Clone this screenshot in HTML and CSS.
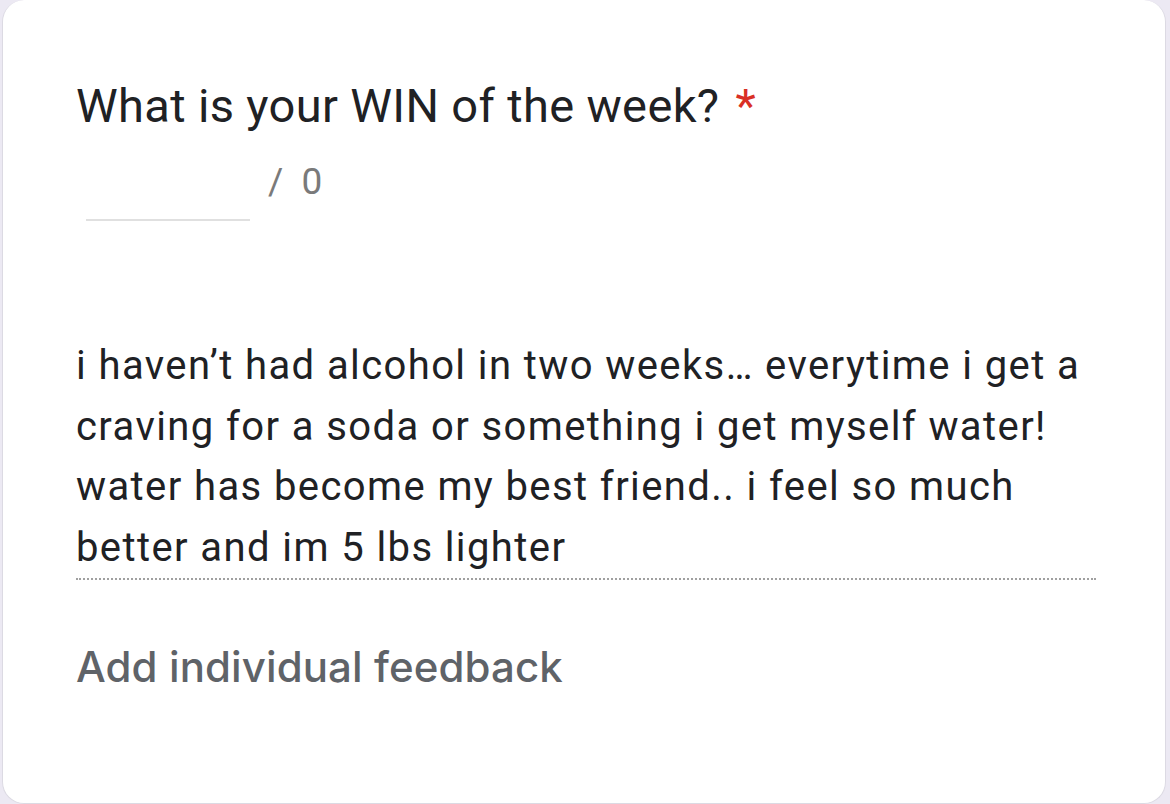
FILE: index.html
```html
<!DOCTYPE html>
<html>
<head>
<meta charset="utf-8">
<link rel="stylesheet" href="styles.css">
</head>
<body>
<div class="card">
  <div class="title">What is your WIN of the week?<span class="req">*</span></div>
  <div class="score">
    <div class="score-input"></div>
    <div class="score-total">/&nbsp;&nbsp;0</div>
  </div>
  <div class="answer">i haven’t had alcohol in two weeks… everytime i get a craving for a soda or something i get myself water! water has become my best friend.. i feel so much better and im 5 lbs lighter</div>
  <div class="feedback">Add individual feedback</div>
</div>
</body>
</html>
```
FILE: styles.css
```css
html, body {
  margin: 0;
  padding: 0;
  background: #ece9f3;
}
body {
  width: 1170px;
  height: 804px;
  overflow: hidden;
  font-family: Roboto, "Liberation Sans", sans-serif;
}
.card {
  box-sizing: border-box;
  margin: 0 4px 0 2px;
  height: 804px;
  background: #ffffff;
  border: 1px solid #dcdae3;
  border-top: none;
  border-radius: 22px;
  padding: 76px 74px 0 73px;
}
.title {
  font-size: 47px;
  line-height: 60px;
  color: #202124;
  letter-spacing: 0.35px;
}
.req {
  color: #d93025;
  margin-left: 16px;
}
.score {
  display: flex;
  align-items: flex-start;
  height: 200px;
}
.score-input {
  width: 164px;
  height: 2px;
  background: #e0e0e0;
  margin: 83px 0 0 10px;
}
.score-total {
  font-size: 37px;
  color: #7a7a7a;
  margin-left: 18px;
  margin-top: 24px;
  line-height: 44px;
}
.answer {
  font-size: 40px;
  line-height: 60.5px;
  letter-spacing: 1.4px;
  color: #202124;
  width: 1020px;
  padding-bottom: 0;
  border-bottom: 2px dotted #a0a0a0;
}
.feedback {
  margin-top: 62px;
  font-family: Inter, Roboto, sans-serif;
  font-size: 42px;
  line-height: 50px;
  letter-spacing: 0.1px;
  font-weight: 500;
  color: #5f6368;
}
```
